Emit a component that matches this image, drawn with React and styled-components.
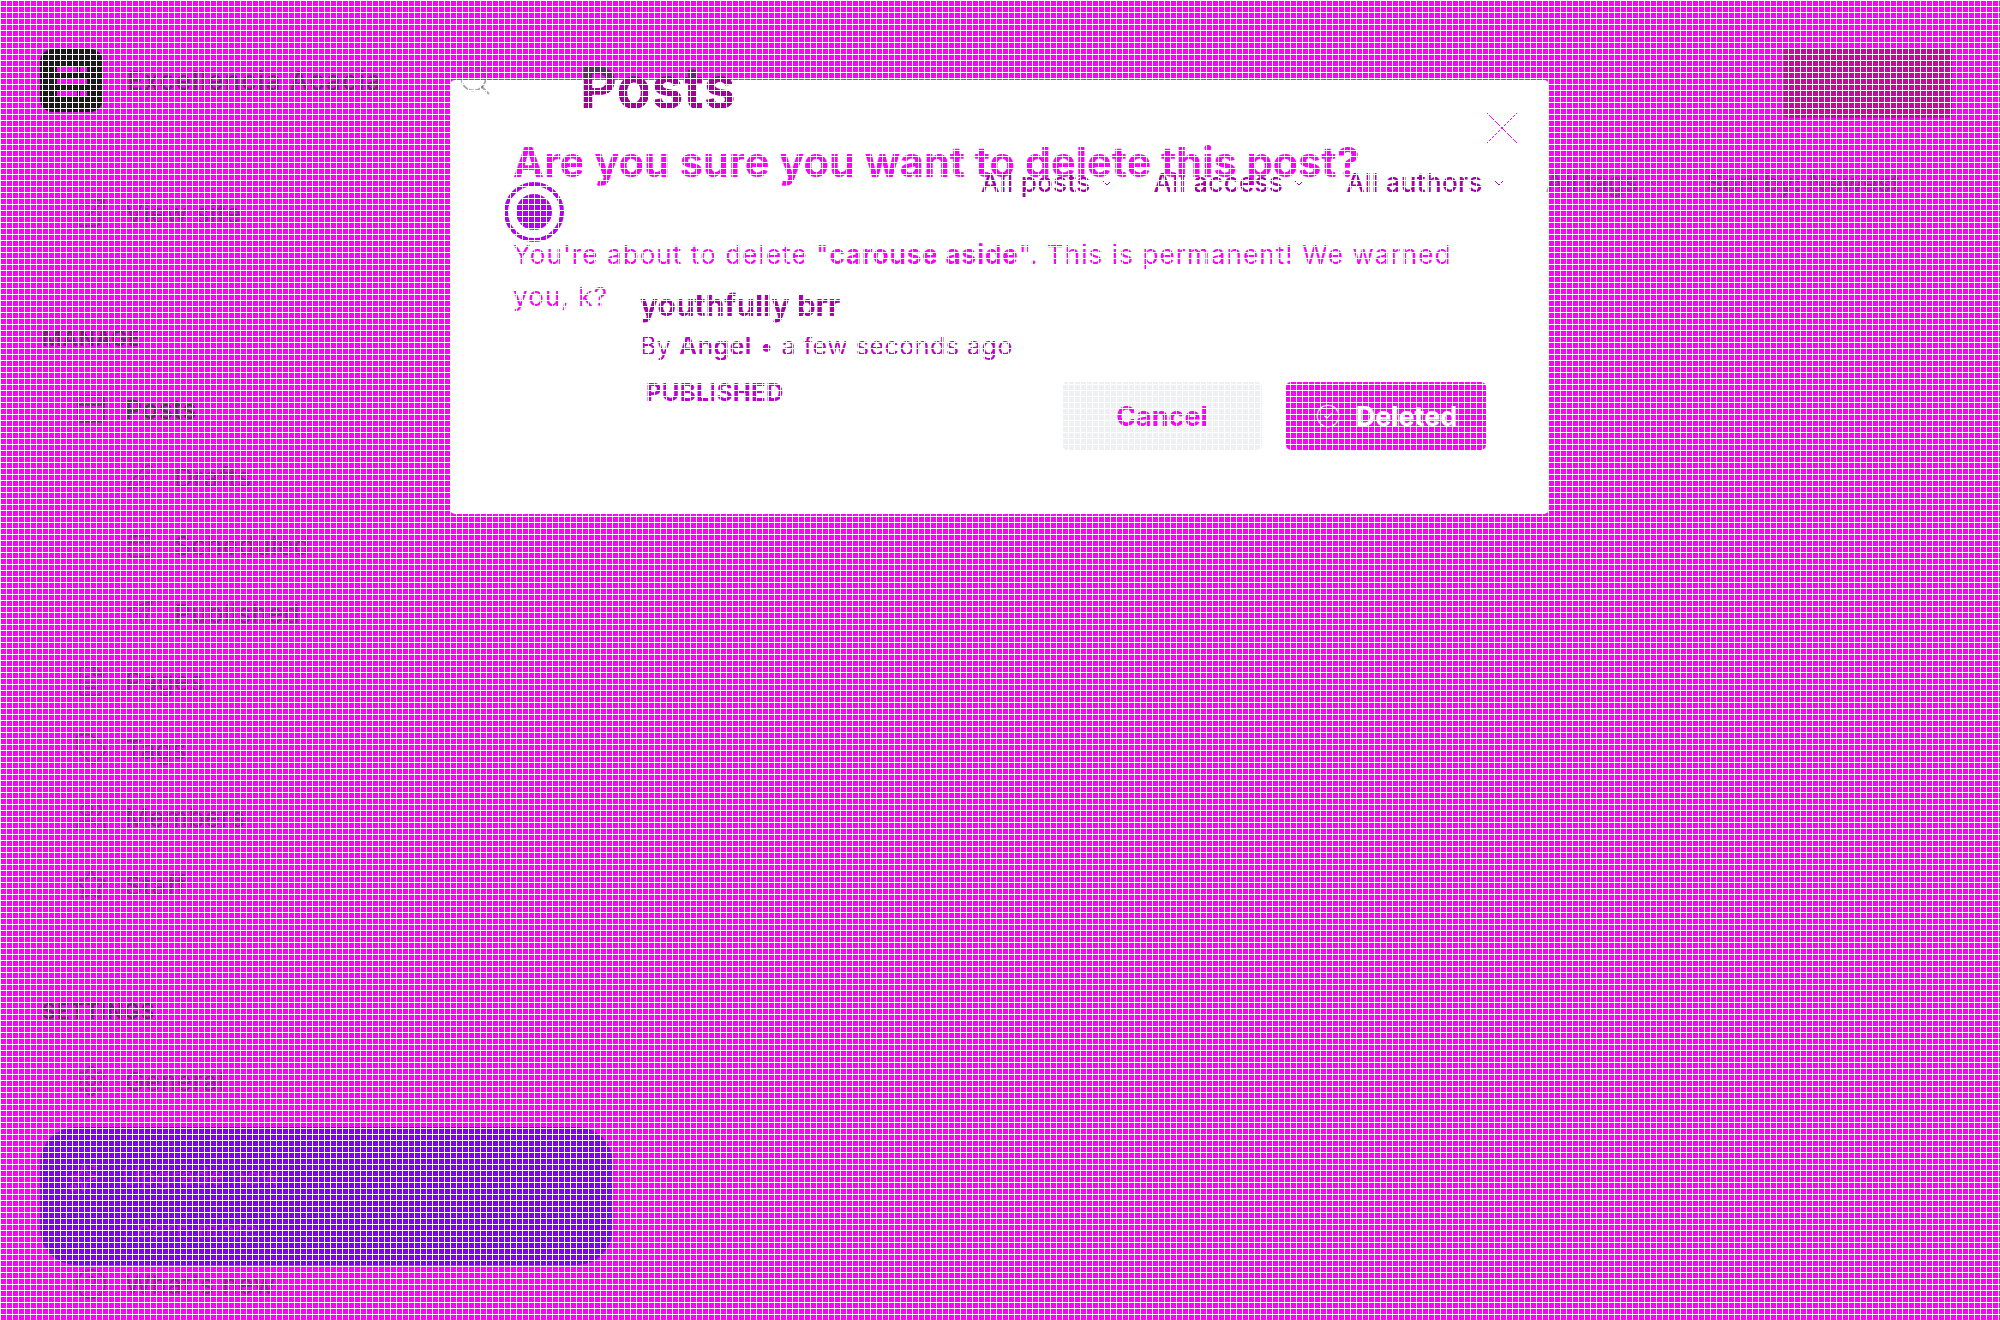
import styled, { createGlobalStyle } from "styled-components";
import {
  Search,
  ChevronDown,
  CircleCheck,
  ExternalLink,
  PanelTop,
  PenLine,
  CalendarDays,
  Send,
  FileText,
  Tag,
  Users,
  Star,
  Settings,
  Sparkles,
  HelpCircle,
} from "lucide-react";

const GlobalStyle = createGlobalStyle`
  html, body {
    margin: 0;
    padding: 0;
    background: #ff00ff;
  }
  * {
    box-sizing: border-box;
  }
`;

const Page = styled.div`
  position: relative;
  width: 2000px;
  height: 1320px;
  overflow: hidden;
  display: grid;
  grid-template-columns: 450px 1fr;
  background: #ff00ff;
  font-family: Inter, "Liberation Sans", sans-serif;
`;

// white mesh lying over the whole picture
const Mesh = styled.div`
  position: absolute;
  inset: 0;
  z-index: 5;
  pointer-events: none;
  background-image:
    linear-gradient(to right, #fff 1px, transparent 1px),
    linear-gradient(to bottom, #fff 1px, transparent 1px);
  background-size: 6px 6px;
`;

const Sidebar = styled.aside`
  display: flex;
  flex-direction: column;
  padding: 49px 0 0 40px;
  width: 640px;
`;

const Brand = styled.div`
  display: flex;
  align-items: center;
  gap: 24px;
  height: 63px;
  font-size: 26px;
  font-weight: 500;
  letter-spacing: 1.3px;
  color: rgba(60, 40, 60, 0.66);
`;

const Logo = styled.svg`
  width: 63px;
  height: 63px;
  flex: none;
`;

const NavItem = styled.div`
  display: flex;
  align-items: center;
  gap: ${(p) => (p.$sub ? "20px" : "17px")};
  height: 68px;
  padding-left: ${(p) => (p.$sub ? "86px" : "34px")};
  font-size: 26px;
  font-weight: ${(p) => (p.$active ? 500 : 400)};
  letter-spacing: 0.6px;
  color: ${(p) => (p.$active ? "rgba(50, 60, 50, 0.85)" : "rgba(70, 30, 70, 0.5)")};

  svg {
    flex: none;
    width: ${(p) => (p.$sub ? "28px" : "34px")};
    height: ${(p) => (p.$sub ? "28px" : "34px")};
    stroke-width: 1.4;
    opacity: 0.8;
  }
`;

const TopItem = styled(NavItem)`
  margin-top: 67px;
`;

const FootItem = styled(NavItem)`
  height: 38px;
`;

const SectionLabel = styled.div`
  height: 20px;
  margin: ${(p) => p.$margin};
  font-size: 21px;
  line-height: 20px;
  font-weight: 600;
  letter-spacing: 1px;
  color: rgba(50, 40, 50, 0.66);
`;

const Banner = styled.div`
  display: flex;
  flex-direction: column;
  gap: 26px;
  width: 573px;
  height: 138px;
  margin-top: 12px;
  padding: 34px 0 0 28px;
  border-radius: 36px;
  background: #8000f0;
  font-size: 24px;
  letter-spacing: 0.5px;
  color: rgba(255, 0, 255, 0.6);
`;

const BannerLine = styled.div`
  display: flex;
  align-items: center;
  gap: 22px;
  padding-left: ${(p) => (p.$indent ? "55px" : "0")};
  line-height: 22px;

  svg {
    width: 32px;
    height: 32px;
    stroke-width: 1.4;
  }
`;

const Main = styled.main`
  position: relative;
  z-index: 2;
  display: flex;
  flex-direction: column;
  padding: 48px 48px 0 7px;
`;

const MainHead = styled.div`
  display: flex;
  align-items: flex-start;
`;

const SearchMark = styled.span`
  display: flex;
  margin-top: 14px;
  color: rgba(90, 90, 90, 0.55);
`;

const Title = styled.h1`
  margin: 10px 0 0 87px;
  font-size: 57px;
  line-height: 60px;
  font-weight: 700;
  background: linear-gradient(#5e2c62 22px, #a4009c 22px);
  -webkit-background-clip: text;
  background-clip: text;
  color: transparent;
`;

const NewButton = styled.div`
  width: 168px;
  height: 70px;
  margin-left: auto;
  border-radius: 4px;
  background: #c8089c;
`;

const Filters = styled.div`
  display: flex;
  justify-content: flex-end;
  gap: 39px;
  margin-top: 50px;
  padding-right: 52px;
`;

const Filter = styled.div`
  display: flex;
  align-items: center;
  gap: 8px;
  font-size: 26px;
  line-height: 30px;
  font-weight: 500;
  letter-spacing: ${(p) => (p.$faded ? "0" : "0.3px")};
  color: ${(p) => (p.$faded ? "rgba(90, 40, 90, 0.5)" : "#a800a8")};
`;

const SortFilter = styled(Filter)`
  margin-left: 5px;
  font-size: 25.5px;
`;

const PostRow = styled.div`
  display: flex;
  gap: 76px;
  margin: -16px 0 0 47px;
`;

const Radio = styled.div`
  display: flex;
  align-items: center;
  justify-content: center;
  flex: none;
  width: 60px;
  height: 60px;
  border: 4px solid #b400f0;
  border-radius: 50%;

  &::after {
    content: "";
    width: 36px;
    height: 36px;
    border-radius: 50%;
    background: #b400f0;
  }
`;

const PostText = styled.div`
  display: flex;
  flex-direction: column;
  margin-top: 104px;
`;

const PostName = styled.div`
  font-size: 30px;
  line-height: 38px;
  font-weight: 700;
  color: #a800a8;
`;

const PostMeta = styled.div`
  margin-top: 5px;
  font-size: 25px;
  line-height: 34px;
  letter-spacing: 0.5px;
  color: #c000c8;

  b {
    font-weight: 600;
  }
`;

const PostStatus = styled.div`
  margin-top: 16px;
  padding-left: 6px;
  font-size: 24px;
  line-height: 28px;
  font-weight: 700;
  letter-spacing: 0.3px;
  color: #c000d8;
`;

const Modal = styled.section`
  position: absolute;
  z-index: 1;
  left: 450px;
  top: 80px;
  width: 1099px;
  height: 434px;
  display: flex;
  flex-direction: column;
  padding: 56px 63px 64px 63px;
  border-radius: 5px;
  background: #fff;
  color: #ff00ff;
`;

const Close = styled.svg`
  position: absolute;
  top: 32px;
  right: 31px;
  width: 32px;
  height: 32px;
  stroke: #ff00ff;
  stroke-width: 1;
`;

const ModalTitle = styled.h2`
  margin: 0;
  font-size: 41.5px;
  line-height: 52px;
  font-weight: 700;
`;

const ModalText = styled.p`
  margin: 46px 0 0 0;
  font-size: 26px;
  line-height: 42px;
  letter-spacing: 1.1px;

  b {
    font-weight: 700;
    letter-spacing: 0.9px;
  }
`;

const Actions = styled.div`
  display: flex;
  justify-content: flex-end;
  gap: 24px;
  margin-top: auto;
`;

const Button = styled.div`
  display: flex;
  align-items: center;
  justify-content: center;
  gap: 15px;
  width: 200px;
  height: 68px;
  border-radius: 5px;
  font-size: 27px;
  font-weight: 700;
  background: ${(p) => (p.$primary ? "#ff00ff" : "#eff0f1")};
  color: ${(p) => (p.$primary ? "#fff" : "#ff00ff")};
`;

const navManage = [
  { label: "Drafts", icon: PenLine },
  { label: "Scheduled", icon: CalendarDays },
  { label: "Published", icon: Send },
];

const navMore = [
  { label: "Pages", icon: FileText },
  { label: "Tags", icon: Tag },
  { label: "Members", icon: Users },
  { label: "Staff", icon: Star },
];

const filters = ["All posts", "All access", "All authors", "All tags"];

const App = () => {
  return (
    <Page>
      <GlobalStyle />

      <Sidebar>
        <Brand>
          <Logo viewBox="0 0 63 63">
            <rect width="63" height="63" rx="13" fill="#1a1a1a" />
            <rect x="17" y="17" width="20" height="6" fill="#ff00ff" />
            <rect x="40" y="17" width="7" height="6" fill="#ff00ff" />
            <rect x="17" y="29" width="30" height="6" fill="#ff00ff" />
            <rect x="17" y="41" width="20" height="6" fill="#ff00ff" />
            <rect x="40" y="41" width="7" height="6" fill="#ff00ff" />
          </Logo>
          Excellencia Acacia
        </Brand>

        <TopItem>
          <ExternalLink />
          View site
        </TopItem>

        <SectionLabel $margin="82px 0 26px 2px">MANAGE</SectionLabel>

        <NavItem $active>
          <PanelTop />
          Posts
        </NavItem>
        {navManage.map((item) => (
          <NavItem $sub key={item.label}>
            <item.icon />
            {item.label}
          </NavItem>
        ))}
        {navMore.map((item) => (
          <NavItem key={item.label}>
            <item.icon />
            {item.label}
          </NavItem>
        ))}

        <SectionLabel $margin="83px 0 25px 2px">SETTINGS</SectionLabel>

        <NavItem>
          <Settings />
          General
        </NavItem>

        <Banner>
          <BannerLine>
            <Sparkles />
            Upgrade now
          </BannerLine>
          <BannerLine $indent>Learn more</BannerLine>
        </Banner>

        <FootItem>
          <HelpCircle />
          What's new
        </FootItem>
      </Sidebar>

      <Modal>
        <Close viewBox="0 0 32 32">
          <path d="M1 1L31 31M31 1L1 31" />
        </Close>
        <ModalTitle>Are you sure you want to delete this post?</ModalTitle>
        <ModalText>
          You're about to delete "<b>carouse aside</b>". This is permanent! We warned you, k?
        </ModalText>
        <Actions>
          <Button>Cancel</Button>
          <Button $primary>
            <CircleCheck size={26} strokeWidth={1} />
            Deleted
          </Button>
        </Actions>
      </Modal>

      <Main>
        <MainHead>
          <SearchMark>
            <Search size={36} strokeWidth={1.2} />
          </SearchMark>
          <Title>Posts</Title>
          <NewButton />
        </MainHead>

        <Filters>
          {filters.map((name, i) => (
            <Filter key={name} $faded={i === 3}>
              {name}
              <ChevronDown size={16} strokeWidth={1.5} />
            </Filter>
          ))}
          <SortFilter $faded>Sort by: Newest</SortFilter>
        </Filters>

        <PostRow>
          <Radio />
          <PostText>
            <PostName>youthfully brr</PostName>
            <PostMeta>
              By <b>Angel</b> • a few seconds ago
            </PostMeta>
            <PostStatus>PUBLISHED</PostStatus>
          </PostText>
        </PostRow>
      </Main>

      <Mesh />
    </Page>
  );
};

export default App;
